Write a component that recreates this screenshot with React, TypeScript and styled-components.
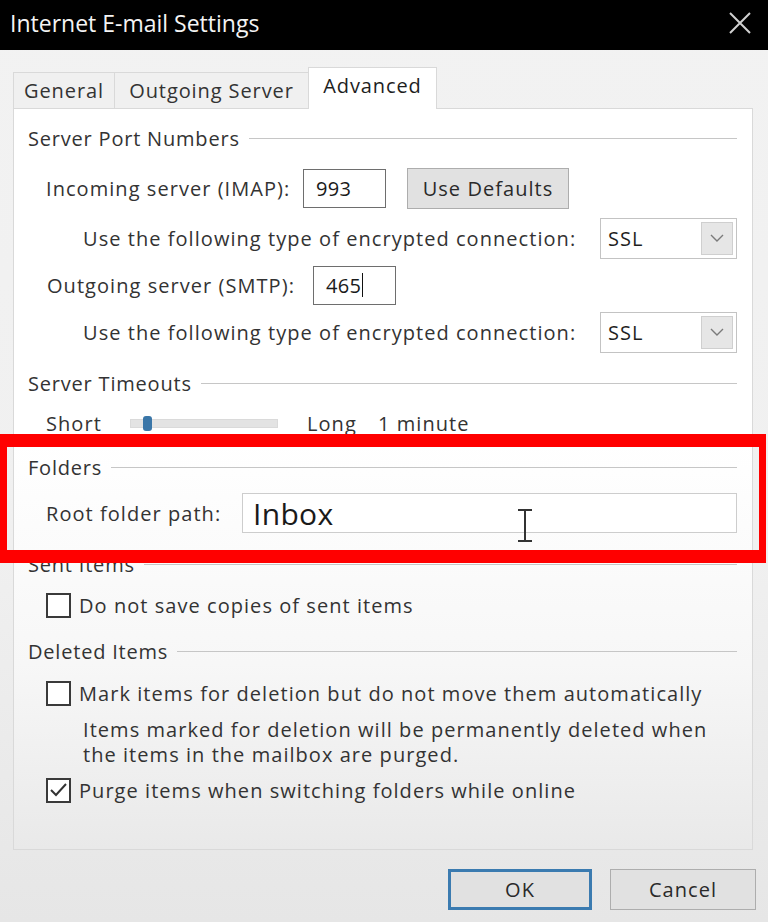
import React from 'react'
import styled, { createGlobalStyle } from 'styled-components'

const GlobalStyle = createGlobalStyle`
  html, body {
    margin: 0;
    padding: 0;
    background: #ededed;
  }
  body {
    font-family: 'Open Sans', 'Noto Sans', sans-serif;
    color: #262626;
  }
`

const Window = styled.div`
  width: 768px;
  height: 922px;
  position: relative;
  overflow: hidden;
  background: linear-gradient(to bottom, #f2f2f2 0%, #f0f0f0 60%, #e6e6e6 100%);
`

const TitleBar = styled.div`
  height: 50px;
  background: #000;
  display: flex;
  align-items: center;
  justify-content: space-between;
  padding: 0 17px 4px 10px;
  box-sizing: border-box;
`

const Title = styled.div`
  color: #f4f4f4;
  font-size: 23px;
`

const Body = styled.div`
  padding: 17px 12px 0 13px;
  font-size: 20px;
  letter-spacing: 1.05px;
`

const TabStrip = styled.div`
  display: flex;
  align-items: flex-end;
  height: 41px;
  margin-left: 1px;
`

const Tab = styled.div<{ $active?: boolean; $width: number }>`
  width: ${p => p.$width}px;
  height: ${p => (p.$active ? 42 : 36)}px;
  box-sizing: border-box;
  display: flex;
  align-items: center;
  justify-content: center;
  padding-bottom: ${p => (p.$active ? 6 : 0)}px;
  background: ${p => (p.$active ? '#fff' : '#f0f0f0')};
  border: 1px solid #d9d9d9;
  border-bottom: none;
  margin-left: -1px;
  margin-bottom: ${p => (p.$active ? -1 : 0)}px;
  position: relative;
  z-index: ${p => (p.$active ? 2 : 1)};
  color: ${p => (p.$active ? '#1e1e1e' : '#333')};
  white-space: nowrap;
  letter-spacing: 0.9px;
`

const Panel = styled.div`
  width: 740px;
  height: 742px;
  box-sizing: border-box;
  border: 1px solid #d9d9d9;
  background: linear-gradient(to bottom, #fff 0%, #fff 45%, #f7f7f7 75%, #e9e9e9 100%);
  padding: 15px 15px 0 14px;
`

const SectionHeader = styled.div<{ $top?: number }>`
  display: flex;
  align-items: center;
  gap: 9px;
  height: 28px;
  margin-top: ${p => p.$top || 0}px;
  color: #333;
  letter-spacing: 0.8px;
  &::after {
    content: '';
    flex: 1;
    border-top: 1px solid #c6c6c6;
  }
`

const Row = styled.div<{ $top: number; $h: number; $indent: number }>`
  display: flex;
  align-items: center;
  height: ${p => p.$h}px;
  margin-top: ${p => p.$top}px;
  padding-left: ${p => p.$indent}px;
`

const Label = styled.span<{ $w?: number }>`
  flex-shrink: 0;
  width: ${p => (p.$w ? `${p.$w}px` : 'auto')};
  white-space: nowrap;
  color: #333;
`

const PortInput = styled.div`
  width: 83px;
  height: 39px;
  box-sizing: border-box;
  border: 1px solid #6e6e6e;
  background: #fff;
  display: flex;
  align-items: center;
  padding-left: 12px;
  color: #1a1a1a;
  letter-spacing: 0.3px;
`

const Caret = styled.span`
  display: inline-block;
  width: 0;
  height: 24px;
  border-left: 1.5px solid #111;
  margin-left: 1px;
`

const Button = styled.div<{ $w: number; $primary?: boolean }>`
  width: ${p => p.$w}px;
  height: 41px;
  box-sizing: border-box;
  display: flex;
  align-items: center;
  justify-content: center;
  background: #e1e1e1;
  border: ${p => (p.$primary ? '3px solid #3b7bb0' : '1px solid #adadad')};
  color: #2a2a2a;
`

const Select = styled.div`
  width: 138px;
  height: 41px;
  box-sizing: border-box;
  border: 1px solid #c3c3c3;
  background: #fff;
  display: flex;
  align-items: center;
  justify-content: space-between;
  padding: 0 3px 0 7px;
  color: #1f1f1f;
`

const SelectButton = styled.div`
  width: 32px;
  height: 33px;
  box-sizing: border-box;
  background: #e6e6e6;
  border: 1px solid #cfcfcf;
  display: flex;
  align-items: center;
  justify-content: center;
`

const Track = styled.div`
  width: 148px;
  height: 9px;
  background: #e3e3e3;
  border: 1px solid #dadada;
  box-sizing: border-box;
  position: relative;
  margin-right: 29px;
`

const Thumb = styled.div`
  position: absolute;
  left: 12px;
  top: -4px;
  width: 9px;
  height: 15px;
  border-radius: 3px;
  background: #3a76a8;
`

const PathInput = styled.div`
  width: 496px;
  height: 40px;
  box-sizing: border-box;
  border: 1px solid #cdcdcd;
  background: #fff;
  display: flex;
  align-items: center;
  padding-left: 10px;
  font-size: 30px;
  letter-spacing: 0.3px;
  color: #1a1a1a;
  position: relative;
`

const IBeam = styled.svg`
  position: absolute;
  left: 274px;
  top: 15px;
`

const CheckRow = styled(Row)`
  gap: 8px;
`

const Box = styled.div`
  width: 25px;
  height: 25px;
  box-sizing: border-box;
  border: 2px solid #3a3a3a;
  background: #fff;
  display: flex;
  align-items: center;
  justify-content: center;
`

const Note = styled.div<{ $top: number }>`
  margin-top: ${p => p.$top}px;
  padding-left: 55px;
  line-height: 25px;
  color: #333;
  white-space: nowrap;
`

const ButtonRow = styled.div`
  display: flex;
  justify-content: flex-end;
  gap: 18px;
  margin-top: 19px;
`

const Highlight = styled.div`
  position: absolute;
  left: 0;
  top: 434px;
  width: 766px;
  height: 129px;
  box-sizing: border-box;
  border-style: solid;
  border-color: #ff0000;
  border-width: 13px 7px;
  pointer-events: none;
`

const Chevron = () => (
  <svg width="14" height="8" viewBox="0 0 14 8">
    <path d="M1 1l6 6 6-6" fill="none" stroke="#7a7a7a" strokeWidth="1.4" />
  </svg>
)

const Check = () => (
  <svg width="19" height="16" viewBox="0 0 19 16">
    <path d="M2 8l5 5L17 2" fill="none" stroke="#333" strokeWidth="2" />
  </svg>
)

const Checkbox = ({ checked, label, top }: { checked?: boolean; label: string; top: number }) => (
  <CheckRow $top={top} $h={28} $indent={18}>
    <Box>{checked && <Check />}</Box>
    <Label>{label}</Label>
  </CheckRow>
)

const EncryptionRow = ({ top }: { top: number }) => (
  <Row $top={top} $h={42} $indent={55}>
    <Label $w={517}>Use the following type of encrypted connection:</Label>
    <Select>
      SSL
      <SelectButton>
        <Chevron />
      </SelectButton>
    </Select>
  </Row>
)

export default function App() {
  return (
    <Window>
      <GlobalStyle />
      <TitleBar>
        <Title>Internet E-mail Settings</Title>
        <svg width="22" height="22" viewBox="0 0 22 22">
          <path d="M1 1l20 20M21 1L1 21" stroke="#d0d0d0" strokeWidth="2" />
        </svg>
      </TitleBar>
      <Body>
        <TabStrip>
          <Tab $width={102}>General</Tab>
          <Tab $width={195}>Outgoing Server</Tab>
          <Tab $width={129} $active>
            Advanced
          </Tab>
        </TabStrip>
        <Panel>
          <SectionHeader>Server Port Numbers</SectionHeader>
          <Row $top={16} $h={40} $indent={18}>
            <Label $w={257}>Incoming server (IMAP):</Label>
            <PortInput>993</PortInput>
            <Button $w={162} style={{ marginLeft: 21 }}>
              Use Defaults
            </Button>
          </Row>
          <EncryptionRow top={9} />
          <Row $top={6} $h={40} $indent={19}>
            <Label $w={266}>Outgoing server (SMTP):</Label>
            <PortInput>
              465
              <Caret />
            </PortInput>
          </Row>
          <EncryptionRow top={6} />

          <SectionHeader $top={16}>Server Timeouts</SectionHeader>
          <Row $top={12} $h={28} $indent={18}>
            <Label $w={84}>Short</Label>
            <Track>
              <Thumb />
            </Track>
            <Label $w={71}>Long</Label>
            <Label>1 minute</Label>
          </Row>

          <SectionHeader $top={16}>Folders</SectionHeader>
          <Row $top={12} $h={40} $indent={18}>
            <Label $w={196}>Root folder path:</Label>
            <PathInput>
              Inbox
              <IBeam width="16" height="33" viewBox="0 0 16 33">
                <path d="M1 1h14M8 1v31M1 32h14" stroke="#333" strokeWidth="2" fill="none" />
              </IBeam>
            </PathInput>
          </Row>

          <SectionHeader $top={17}>Sent Items</SectionHeader>
          <Checkbox top={13} label="Do not save copies of sent items" />

          <SectionHeader $top={18}>Deleted Items</SectionHeader>
          <Checkbox top={14} label="Mark items for deletion but do not move them automatically" />
          <Note $top={10}>
            Items marked for deletion will be permanently deleted when
            <br />
            the items in the mailbox are purged.
          </Note>
          <Checkbox top={9} checked label="Purge items when switching folders while online" />
        </Panel>
        <ButtonRow>
          <Button $w={144} $primary>
            OK
          </Button>
          <Button $w={146}>Cancel</Button>
        </ButtonRow>
      </Body>
      <Highlight />
    </Window>
  )
}
